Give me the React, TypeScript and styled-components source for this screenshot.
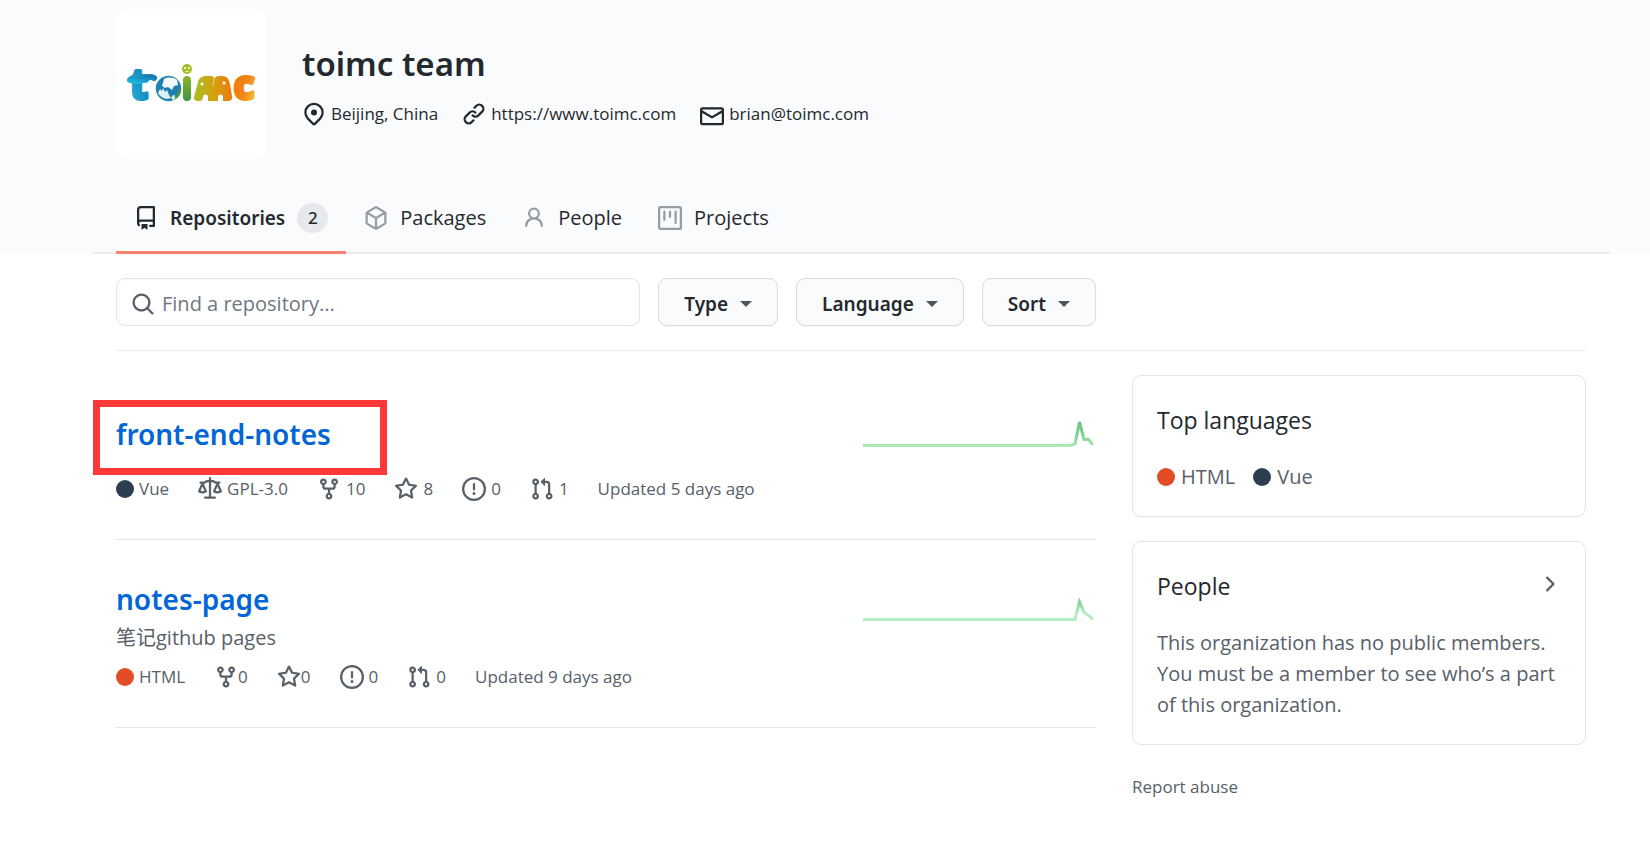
import React from "react";
import styled, { createGlobalStyle } from "styled-components";

const color = {
  text: "#24292e",
  muted: "#586069",
  faint: "#959da5",
  link: "#0366d6",
  line: "#e1e4e8",
  softLine: "#eaecef",
  panel: "#fafbfd",
  accent: "#f9826c",
  mark: "#fd3838",
};

const strongFont = `"Noto Sans", "Open Sans", "Noto Sans CJK SC", sans-serif`;

const GlobalStyle = createGlobalStyle`
  *, *::before, *::after { box-sizing: border-box; }
  body {
    margin: 0;
    background: #fff;
    color: ${color.text};
    font: 400 20px/30px "Open Sans", "Noto Sans CJK SC", sans-serif;
  }
  h1, h2, h3, p, ul { margin: 0; padding: 0; }
  ul { list-style: none; }
  a { color: inherit; text-decoration: none; }
`;

/* ---------- icons ---------- */

const icons = {
  location:
    "M11.536 3.464a5 5 0 010 7.072L8 14.07l-3.536-3.535a5 5 0 117.072-7.072v.001zm1.06 8.132a6.5 6.5 0 10-9.192 0l3.535 3.536a1.5 1.5 0 002.122 0l3.535-3.536zM8 9a2 2 0 100-4 2 2 0 000 4z",
  link: "M7.775 3.275a.75.75 0 001.06 1.06l1.25-1.25a2 2 0 112.83 2.83l-2.5 2.5a2 2 0 01-2.83 0 .75.75 0 00-1.06 1.06 3.5 3.5 0 004.95 0l2.5-2.5a3.5 3.5 0 00-4.95-4.95l-1.25 1.25zm-4.69 9.64a2 2 0 010-2.83l2.5-2.5a2 2 0 012.83 0 .75.75 0 001.06-1.06 3.5 3.5 0 00-4.95 0l-2.5 2.5a3.5 3.5 0 004.95 4.95l1.25-1.25a.75.75 0 00-1.06-1.06l-1.25 1.25a2 2 0 01-2.83 0z",
  mail: "M1.75 2A1.75 1.75 0 000 3.75v.736a.75.75 0 000 .027v7.737C0 13.216.784 14 1.75 14h12.5A1.75 1.75 0 0016 12.25v-8.5A1.75 1.75 0 0014.25 2H1.75zM14.5 4.07v-.32a.25.25 0 00-.25-.25H1.75a.25.25 0 00-.25.25v.32L8 7.88l6.5-3.81zm-13 1.74v6.441c0 .138.112.25.25.25h12.5a.25.25 0 00.25-.25V5.809L8.38 9.397a.75.75 0 01-.76 0L1.5 5.809z",
  repo: "M2 2.5A2.5 2.5 0 014.5 0h8.75a.75.75 0 01.75.75v12.5a.75.75 0 01-.75.75h-2.5a.75.75 0 110-1.5h1.75v-2h-8a1 1 0 00-.714 1.7.75.75 0 01-1.072 1.05A2.495 2.495 0 012 11.5v-9zm10.5-1V9h-8c-.356 0-.694.074-1 .208V2.5a1 1 0 011-1h8zM5 12.25v3.25a.25.25 0 00.4.2l1.45-1.087a.25.25 0 01.3 0L8.6 15.7a.25.25 0 00.4-.2v-3.25a.25.25 0 00-.25-.25h-3.5a.25.25 0 00-.25.25z",
  package:
    "M8.878.392a1.75 1.75 0 00-1.756 0l-5.25 3.045A1.75 1.75 0 001 4.951v6.098c0 .624.332 1.2.872 1.514l5.25 3.045a1.75 1.75 0 001.756 0l5.25-3.045c.54-.313.872-.89.872-1.514V4.951c0-.624-.332-1.2-.872-1.514L8.878.392zM7.875 1.69a.25.25 0 01.25 0l4.63 2.685L8 7.133 3.245 4.375l4.63-2.685zM2.5 5.677v5.372c0 .09.047.171.125.216l4.625 2.683V8.432L2.5 5.677zm6.25 8.271l4.625-2.683a.25.25 0 00.125-.216V5.677L8.75 8.432v5.516z",
  person:
    "M10.5 5a2.5 2.5 0 11-5 0 2.5 2.5 0 015 0zm.061 3.073a4 4 0 10-5.123 0 6.004 6.004 0 00-3.431 5.142.75.75 0 001.498.07 4.5 4.5 0 018.99 0 .75.75 0 101.498-.07 6.005 6.005 0 00-3.432-5.142z",
  project:
    "M1.75 0A1.75 1.75 0 000 1.75v12.5C0 15.216.784 16 1.75 16h12.5A1.75 1.75 0 0016 14.25V1.75A1.75 1.75 0 0014.25 0H1.75zM1.5 1.75a.25.25 0 01.25-.25h12.5a.25.25 0 01.25.25v12.5a.25.25 0 01-.25.25H1.75a.25.25 0 01-.25-.25V1.75zM11.75 3a.75.75 0 00-.75.75v7.5a.75.75 0 001.5 0v-7.5a.75.75 0 00-.75-.75zm-8.25.75a.75.75 0 011.5 0v5.5a.75.75 0 01-1.5 0v-5.5zM8 3a.75.75 0 00-.75.75v3.5a.75.75 0 001.5 0v-3.5A.75.75 0 008 3z",
  search:
    "M11.5 7a4.499 4.499 0 11-8.998 0A4.499 4.499 0 0111.5 7zm-.82 4.74a6 6 0 111.06-1.06l3.04 3.04a.75.75 0 11-1.06 1.06l-3.04-3.04z",
  law: "M8.75.75a.75.75 0 00-1.5 0V2h-.984c-.305 0-.604.08-.869.23l-1.288.737A.25.25 0 013.984 3H1.75a.75.75 0 000 1.5h.428L.066 9.192a.75.75 0 00.154.838l.53-.53-.53.53v.001l.002.002.002.002.006.006.016.015.045.04a3.514 3.514 0 00.686.45A4.492 4.492 0 003 11c.88 0 1.556-.22 2.023-.454a3.515 3.515 0 00.686-.45l.045-.04.016-.015.006-.006.002-.002.001-.002L5.25 9.5l.53.53a.75.75 0 00.154-.838L3.822 4.5h.162c.305 0 .604-.08.869-.23l1.289-.737a.25.25 0 01.124-.033h.984V13h-2.5a.75.75 0 000 1.5h6.5a.75.75 0 000-1.5h-2.5V3.5h.984a.25.25 0 01.124.033l1.29.736c.264.152.563.231.868.231h.162l-2.112 4.692a.75.75 0 00.154.838l.53-.53-.53.53v.001l.002.002.002.002.006.006.016.015.045.04a3.517 3.517 0 00.686.45A4.492 4.492 0 0013 11c.88 0 1.556-.22 2.023-.454a3.512 3.512 0 00.686-.45l.045-.04.01-.01.006-.005.006-.006.002-.002.001-.002-.529-.531.53.53a.75.75 0 00.154-.838L13.823 4.5h.427a.75.75 0 000-1.5h-2.234a.25.25 0 01-.124-.033l-1.29-.736A1.75 1.75 0 009.735 2H8.75V.75zM1.695 9.227c.285.135.718.273 1.305.273s1.02-.138 1.305-.273L3 6.327l-1.305 2.9zm10 0c.285.135.718.273 1.305.273s1.02-.138 1.305-.273L13 6.327l-1.305 2.9z",
  fork: "M5 3.25a.75.75 0 11-1.5 0 .75.75 0 011.5 0zm0 2.122a2.25 2.25 0 10-1.5 0v.878A2.25 2.25 0 005.75 8.5h1.5v2.128a2.251 2.251 0 101.5 0V8.5h1.5a2.25 2.25 0 002.25-2.25v-.878a2.25 2.25 0 10-1.5 0v.878a.75.75 0 01-.75.75h-4.5A.75.75 0 015 6.25v-.878zm3.75 7.378a.75.75 0 11-1.5 0 .75.75 0 011.5 0zm3-8.75a.75.75 0 100-1.5.75.75 0 000 1.5z",
  star: "M8 .25a.75.75 0 01.673.418l1.882 3.815 4.21.612a.75.75 0 01.416 1.279l-3.046 2.97.719 4.192a.75.75 0 01-1.088.791L8 12.347l-3.766 1.98a.75.75 0 01-1.088-.79l.72-4.194L.818 6.374a.75.75 0 01.416-1.28l4.21-.611L7.327.668A.75.75 0 018 .25zm0 2.445L6.615 5.5a.75.75 0 01-.564.41l-3.097.45 2.24 2.184a.75.75 0 01.216.664l-.528 3.084 2.769-1.456a.75.75 0 01.698 0l2.77 1.456-.53-3.084a.75.75 0 01.216-.664l2.24-2.183-3.096-.45a.75.75 0 01-.564-.41L8 2.694v.001z",
  issue:
    "M8 1.5a6.5 6.5 0 100 13 6.5 6.5 0 000-13zM0 8a8 8 0 1116 0A8 8 0 010 8zm9 3a1 1 0 11-2 0 1 1 0 012 0zm-.25-6.25a.75.75 0 00-1.5 0v3.5a.75.75 0 001.5 0v-3.5z",
  pull: "M7.177 3.073L9.573.677A.25.25 0 0110 .854v4.792a.25.25 0 01-.427.177L7.177 3.427a.25.25 0 010-.354zM3.75 2.5a.75.75 0 100 1.5.75.75 0 000-1.5zm-2.25.75a2.25 2.25 0 113 2.122v5.256a2.251 2.251 0 11-1.5 0V5.372A2.25 2.25 0 011.5 3.25zM11 2.5h-1V4h1a1 1 0 011 1v5.628a2.251 2.251 0 101.5 0V5A2.5 2.5 0 0011 2.5zm1 10.25a.75.75 0 111.5 0 .75.75 0 01-1.5 0zM3.75 12a.75.75 0 100 1.5.75.75 0 000-1.5z",
  chevron:
    "M6.22 3.22a.75.75 0 011.06 0l4.25 4.25a.75.75 0 010 1.06l-4.25 4.25a.75.75 0 01-1.06-1.06L9.94 8 6.22 4.28a.75.75 0 010-1.06z",
};

type IconName = keyof typeof icons;

const IconSvg = styled.svg`
  flex: none;
  width: 24px;
  height: 24px;
  fill: currentColor;
`;

function Icon({ name }: { name: IconName }) {
  // The envelope rests lower in its box than the other icons.
  return (
    <IconSvg viewBox={name === "mail" ? "0 -1.500 16 16" : "0 0 16 16"} aria-hidden="true">
      <path fillRule="evenodd" d={icons[name]} />
    </IconSvg>
  );
}

/* ---------- header ---------- */

const Header = styled.header`
  padding: 9px 40px 0 92px;
  background: ${color.panel};
`;

const Profile = styled.div`
  display: flex;
  align-items: center;
  gap: 36px;
  padding: 0 24px;
`;

const Avatar = styled.div`
  flex: none;
  width: 150px;
  height: 150px;
  border-radius: 9px;
  background: #fff;
  overflow: hidden;
`;

const ProfileText = styled.div`
  display: flex;
  flex-direction: column;
  gap: 16px;
`;

const OrgName = styled.h1`
  font: 600 33px/44px ${strongFont};
`;

const ContactList = styled.ul`
  display: flex;
  flex-wrap: wrap;
  gap: 24px;
  font-size: 17px;
  line-height: 24px;
`;

const Contact = styled.li`
  display: flex;
  align-items: center;
  gap: 5px;
`;

const Tabs = styled.nav`
  display: flex;
  margin-top: 26px;
  padding: 0 24px;
  border-bottom: 2px solid ${color.softLine};
`;

const Tab = styled.a<{ $active?: boolean }>`
  display: flex;
  align-items: center;
  gap: 12px;
  height: 69px;
  margin-bottom: -2px;
  padding: 0 18px;
  border-bottom: 3px solid ${(p) => (p.$active ? color.accent : "transparent")};
  ${(p) => p.$active && `font: 600 19px/30px ${strongFont};`}

  svg {
    color: ${(p) => (p.$active ? color.text : color.faint)};
  }
`;

const Counter = styled.span`
  display: grid;
  place-items: center;
  width: 31px;
  height: 30px;
  border-radius: 15px;
  background: #e7e8eb;
  font-size: 17px;
  font-weight: 500;
`;

function Logo() {
  return (
    <svg viewBox="0 0 150 150" width="150" height="150" role="img" aria-label="toimc logo">
      <defs>
        <linearGradient id="blue" x1="0" y1="1" x2="1" y2="0">
          <stop offset="0" stopColor="#1cb4dc" />
          <stop offset="1" stopColor="#1a76b0" />
        </linearGradient>
        <linearGradient id="green" x1="0" y1="0" x2="0" y2="1">
          <stop offset="0" stopColor="#8fb62b" />
          <stop offset="1" stopColor="#3f9440" />
        </linearGradient>
        <linearGradient id="herd" x1="0" y1="0" x2="1" y2="0">
          <stop offset="0" stopColor="#a9bf22" />
          <stop offset="0.5" stopColor="#d3a212" />
          <stop offset="1" stopColor="#ee7a0c" />
        </linearGradient>
        <linearGradient id="orange" x1="0" y1="0" x2="1" y2="1">
          <stop offset="0" stopColor="#ee6a10" />
          <stop offset="0.6" stopColor="#f28a18" />
          <stop offset="1" stopColor="#f7d63c" />
        </linearGradient>
      </defs>

      <g fill="url(#blue)" stroke="url(#blue)" strokeLinejoin="round" strokeLinecap="round">
        <text x="14" y="90" fontFamily="Open Sans, sans-serif" fontWeight="700" fontSize="41" strokeWidth="4">
          t
        </text>
        <path d="M14 71C20 73 25 72 29 70S35 67 38 69" fill="none" strokeWidth="6" />
      </g>

      <circle cx="52.500" cy="79.500" r="12" fill="#1d7fb4" stroke="#2a86a8" strokeWidth="1.500" />
      <path d="M48 70c4-2 9-2 13 1l1 5-4 1-2 4-4-3-3 1-3-2z" fill="#f1f9fc" />
      <path d="M42 84l2-4 2 2 1-3 2 4 2-2 2 5 2 3c-5 2-10 0-13-5z" fill="#dff1f7" />
      <path d="M55 89l2-3 3 1 1 2-4 2z" fill="#e3f2d6" />
      <path d="M59 89c3-2 5-5 5-9" fill="none" stroke="#3d9a4a" strokeWidth="2.500" />

      <circle cx="71" cy="60" r="5" fill="#a2bd25" />
      <circle cx="69" cy="59" r="1" fill="#fff" />
      <circle cx="73" cy="59" r="1" fill="#fff" />
      <path d="M69 62q2 1.500 4 0" fill="none" stroke="#fff" strokeWidth="0.700" />
      <rect x="67" y="67" width="8" height="25" rx="4" fill="url(#green)" />

      <path
        d="M78 88L82 73C83 69 86 67 90 67H95C97 67 98 68 98 70C99 68 101 67 103 67H106C111 67 113 70 114 75L116 87C117 91 114 92 112 92H107V88a2.500 2.500 0 0 0-5 0V92H92V88a2.500 2.500 0 0 0-5 0C87 90 86 92 83 92C80 92 77 91 78 88Z"
        fill="url(#herd)"
      />
      <path d="M98 70l-1 7" stroke="#f3dc9a" strokeWidth="0.800" />
      <circle cx="86" cy="75" r="1.500" fill="#fff" />
      <circle cx="108" cy="74" r="1.500" fill="#fff" />

      <text
        x="118"
        y="90"
        fontFamily="Open Sans, sans-serif"
        fontWeight="700"
        fontSize="40"
        fill="url(#orange)"
        stroke="url(#orange)"
        strokeWidth="4"
        strokeLinejoin="round"
      >
        c
      </text>
    </svg>
  );
}

/* ---------- toolbar ---------- */

const Content = styled.main`
  margin: 24px 64px 40px 116px;
`;

const Toolbar = styled.div`
  padding-bottom: 24px;
  border-bottom: 1px solid ${color.softLine};
`;

const ToolbarRow = styled.form`
  display: flex;
  gap: 18px;
  width: calc(100% * 2 / 3);
`;

const SearchBox = styled.label`
  display: flex;
  flex: 1;
  align-items: center;
  gap: 7px;
  min-width: 0;
  height: 48px;
  padding: 4px 14px 0;
  border: 1px solid ${color.line};
  border-radius: 9px;
  box-shadow: inset 0 1px 0 rgba(225, 228, 232, 0.2);
  color: ${color.muted};
`;

const SearchInput = styled.input`
  flex: 1;
  min-width: 0;
  padding: 0;
  border: 0;
  outline: 0;
  background: transparent;
  color: ${color.text};
  font: inherit;

  &::placeholder {
    color: #6f7781;
    opacity: 1;
  }
`;

const MenuButton = styled.button`
  display: flex;
  align-items: center;
  gap: 12px;
  height: 48px;
  padding: 4px 25px 0;
  border: 1px solid #d9dbde;
  border-radius: 9px;
  background: ${color.panel};
  box-shadow: 0 1px 0 rgba(27, 31, 35, 0.04);
  color: ${color.text};
  font: 600 19px/30px ${strongFont};

  &::after {
    content: "";
    border: 6px solid transparent;
    border-top-color: #50555a;
    border-bottom: 0;
  }
`;

/* ---------- repositories ---------- */

const Columns = styled.div`
  display: grid;
  grid-template-columns: 2fr 1fr;
  align-items: start;
  margin-top: 24px;
`;

const RepoItem = styled.li`
  padding: 38px 0;
  border-bottom: 1px solid ${color.line};
`;

const RepoTop = styled.div`
  display: flex;
  align-items: flex-start;
  justify-content: space-between;
`;

const RepoName = styled.h3`
  position: relative;
  color: ${color.link};
  font: 600 28px/42px ${strongFont};
`;

const Highlight = styled.span`
  position: absolute;
  top: -13px;
  left: -23px;
  width: 294px;
  height: 75px;
  border: 7px solid ${color.mark};
  pointer-events: none;
`;

const Description = styled.p`
  margin-top: 3px;
  color: ${color.muted};
`;

const MetaList = styled.ul<{ $afterText: boolean }>`
  display: flex;
  flex-wrap: wrap;
  gap: 29px;
  margin-top: ${(p) => (p.$afterText ? 12 : 22)}px;
  color: ${color.muted};
  font-size: 17px;
  line-height: 24px;
`;

const Meta = styled.li<{ $tight?: boolean }>`
  display: flex;
  align-items: center;
  gap: ${(p) => (p.$tight ? 0 : 5)}px;
`;

const Dot = styled.span<{ $color: string }>`
  width: 18px;
  height: 18px;
  border-radius: 50%;
  background: ${(p) => p.$color};
`;

const Chart = styled.svg`
  flex: none;
  width: 233px;
  height: 45px;
`;

const languages = {
  HTML: "#e34c26",
  Vue: "#2c3e50",
};

type Repo = {
  name: string;
  description?: string;
  language: keyof typeof languages;
  marked?: boolean;
  stats: { icon: IconName; value: string; tight?: boolean }[];
  updated: string;
  activity: string;
};

const repos: Repo[] = [
  {
    name: "front-end-notes",
    language: "Vue",
    marked: true,
    stats: [
      { icon: "law", value: "GPL-3.0" },
      { icon: "fork", value: "10" },
      { icon: "star", value: "8" },
      { icon: "issue", value: "0" },
      { icon: "pull", value: "1" },
    ],
    updated: "Updated 5 days ago",
    activity: "0,32.5 207,32.5 212,31 216.500,9 221,26.5 225.500,26.5 230,32",
  },
  {
    name: "notes-page",
    description: "笔记github pages",
    language: "HTML",
    stats: [
      { icon: "fork", value: "0", tight: true },
      { icon: "star", value: "0", tight: true },
      { icon: "issue", value: "0" },
      { icon: "pull", value: "0" },
    ],
    updated: "Updated 9 days ago",
    activity: "0,41.5 212,41.5 216.500,24 221,34.5 225.500,37.5 230,41.5",
  },
];

function Sparkline({ id, points }: { id: string; points: string }) {
  return (
    <Chart viewBox="0 0 233 45" aria-hidden="true">
      <defs>
        <linearGradient id={id} gradientUnits="userSpaceOnUse" x1="0" y1="36" x2="0" y2="10">
          <stop offset="0" stopColor="#b8edc3" />
          <stop offset="0.5" stopColor="#7dd392" />
          <stop offset="1" stopColor="#6cc584" />
        </linearGradient>
      </defs>
      <polyline points={points} fill="none" stroke={`url(#${id})`} strokeWidth="3" />
    </Chart>
  );
}

function RepoRow({ repo }: { repo: Repo }) {
  return (
    <RepoItem>
      <RepoTop>
        <div>
          <RepoName>
            <a href="#repo">{repo.name}</a>
            {repo.marked && <Highlight />}
          </RepoName>
          {repo.description && <Description>{repo.description}</Description>}
          <MetaList $afterText={Boolean(repo.description)}>
            <Meta>
              <Dot $color={languages[repo.language]} />
              {repo.language}
            </Meta>
            {repo.stats.map((stat) => (
              <Meta key={stat.icon} $tight={stat.tight}>
                <Icon name={stat.icon} />
                {stat.value}
              </Meta>
            ))}
            <Meta>{repo.updated}</Meta>
          </MetaList>
        </div>
        <Sparkline id={`activity-${repo.name}`} points={repo.activity} />
      </RepoTop>
    </RepoItem>
  );
}

/* ---------- sidebar ---------- */

const Sidebar = styled.aside`
  padding-left: 36px;
`;

const Card = styled.section`
  margin-bottom: 24px;
  padding: 24px;
  border: 1px solid ${color.line};
  border-radius: 9px;
`;

const CardTitle = styled.h2`
  font-size: 23px;
  font-weight: 400;
  line-height: 40px;
`;

const CardLink = styled.a`
  display: flex;
  justify-content: space-between;

  svg {
    margin-top: 6px;
    color: ${color.muted};
  }
`;

const LanguageList = styled.ul`
  display: flex;
  gap: 18px;
  margin-top: 22px;
  color: ${color.muted};
`;

const Language = styled.li`
  display: flex;
  align-items: center;
  gap: 6px;
`;

const CardText = styled.p`
  margin-top: 21px;
  color: ${color.muted};
  line-height: 31px;
`;

const ReportLink = styled.a`
  display: inline-block;
  margin-top: 6px;
  color: ${color.muted};
  font-size: 17px;
  line-height: 24px;
`;

export default function App() {
  return (
    <>
      <GlobalStyle />
      <Header>
        <Profile>
          <Avatar>
            <Logo />
          </Avatar>
          <ProfileText>
            <OrgName>toimc team</OrgName>
            <ContactList>
              <Contact>
                <Icon name="location" />
                Beijing, China
              </Contact>
              <Contact>
                <Icon name="link" />
                <a href="#site">https://www.toimc.com</a>
              </Contact>
              <Contact>
                <Icon name="mail" />
                <a href="#mail">brian@toimc.com</a>
              </Contact>
            </ContactList>
          </ProfileText>
        </Profile>
        <Tabs aria-label="Organization">
          <Tab href="#repositories" $active aria-current="page">
            <Icon name="repo" />
            Repositories
            <Counter>2</Counter>
          </Tab>
          <Tab href="#packages">
            <Icon name="package" />
            Packages
          </Tab>
          <Tab href="#people">
            <Icon name="person" />
            People
          </Tab>
          <Tab href="#projects">
            <Icon name="project" />
            Projects
          </Tab>
        </Tabs>
      </Header>

      <Content>
        <Toolbar>
          <ToolbarRow role="search">
            <SearchBox>
              <Icon name="search" />
              <SearchInput type="text" placeholder="Find a repository..." aria-label="Find a repository" />
            </SearchBox>
            <MenuButton type="button">Type</MenuButton>
            <MenuButton type="button">Language</MenuButton>
            <MenuButton type="button">Sort</MenuButton>
          </ToolbarRow>
        </Toolbar>

        <Columns>
          <ul>
            {repos.map((repo) => (
              <RepoRow key={repo.name} repo={repo} />
            ))}
          </ul>

          <Sidebar>
            <Card>
              <CardTitle>Top languages</CardTitle>
              <LanguageList>
                {Object.entries(languages).map(([name, tint]) => (
                  <Language key={name}>
                    <Dot $color={tint} />
                    {name}
                  </Language>
                ))}
              </LanguageList>
            </Card>
            <Card>
              <CardLink href="#members">
                <CardTitle>People</CardTitle>
                <Icon name="chevron" />
              </CardLink>
              <CardText>
                This organization has no public members. You must be a member to see who’s a part of this
                organization.
              </CardText>
            </Card>
            <ReportLink href="#report">Report abuse</ReportLink>
          </Sidebar>
        </Columns>
      </Content>
    </>
  );
}
